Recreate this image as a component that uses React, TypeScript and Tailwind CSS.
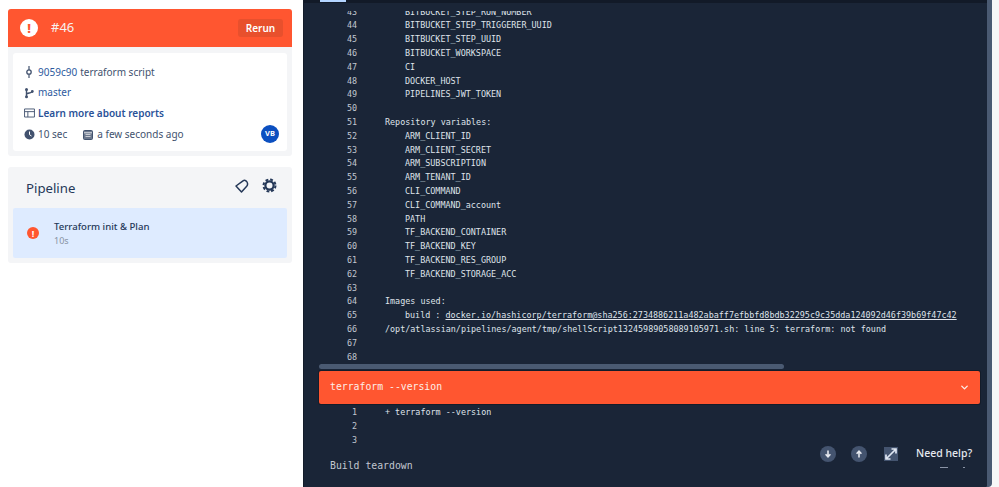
import { ChevronDown } from "lucide-react";

const sans = "font-['Noto_Sans','Open_Sans',sans-serif]";

type LogLine = { n: number; text?: string; indent?: boolean; link?: string };

const stepLog: LogLine[] = [
  { n: 43, text: "BITBUCKET_STEP_RUN_NUMBER", indent: true },
  { n: 44, text: "BITBUCKET_STEP_TRIGGERER_UUID", indent: true },
  { n: 45, text: "BITBUCKET_STEP_UUID", indent: true },
  { n: 46, text: "BITBUCKET_WORKSPACE", indent: true },
  { n: 47, text: "CI", indent: true },
  { n: 48, text: "DOCKER_HOST", indent: true },
  { n: 49, text: "PIPELINES_JWT_TOKEN", indent: true },
  { n: 50 },
  { n: 51, text: "Repository variables:" },
  { n: 52, text: "ARM_CLIENT_ID", indent: true },
  { n: 53, text: "ARM_CLIENT_SECRET", indent: true },
  { n: 54, text: "ARM_SUBSCRIPTION", indent: true },
  { n: 55, text: "ARM_TENANT_ID", indent: true },
  { n: 56, text: "CLI_COMMAND", indent: true },
  { n: 57, text: "CLI_COMMAND_account", indent: true },
  { n: 58, text: "PATH", indent: true },
  { n: 59, text: "TF_BACKEND_CONTAINER", indent: true },
  { n: 60, text: "TF_BACKEND_KEY", indent: true },
  { n: 61, text: "TF_BACKEND_RES_GROUP", indent: true },
  { n: 62, text: "TF_BACKEND_STORAGE_ACC", indent: true },
  { n: 63 },
  { n: 64, text: "Images used:" },
  {
    n: 65,
    text: "build : ",
    indent: true,
    link: "docker.io/hashicorp/terraform@sha256:2734886211a482abaff7efbbfd8bdb32295c9c35dda124092d46f39b69f47c42"
  },
  { n: 66, text: "/opt/atlassian/pipelines/agent/tmp/shellScript13245989058089105971.sh: line 5: terraform: not found" },
  { n: 67 },
  { n: 68 }
];

const commandLog: LogLine[] = [{ n: 1, text: "+ terraform --version" }, { n: 2 }, { n: 3 }];

function LogRow({ n, text, indent, link }: LogLine) {
  return (
    <div className="flex h-[13.8px] items-center whitespace-pre">
      <span className="w-[38px] shrink-0 text-right text-[#c1c7d0]">{n}</span>
      <span className={indent ? "pl-[48px]" : "pl-[28px]"}>
        {text}
        {link && <span className="underline">{link}</span>}
      </span>
    </div>
  );
}

function RoundButton({ up }: { up?: boolean }) {
  return (
    <div className="flex h-[16px] w-[16px] items-center justify-center rounded-full bg-[#44546f]">
      <svg width="10" height="10" viewBox="0 0 10 10" className={up ? "rotate-180" : ""}>
        <path d="M5 1.500v6M2.600 5.200 5 7.800l2.400-2.600" fill="none" stroke="#e6e9ef" strokeWidth="1.600" />
      </svg>
    </div>
  );
}

export default function App() {
  return (
    <div className={`flex h-[487px] w-[999px] overflow-hidden bg-white ${sans}`}>
      <aside className="w-[303px] shrink-0 pl-[8px] pr-[11px] pt-[9px]">
        <div className="rounded-[3px] bg-[#f4f5f7] pb-[5px]">
          <div className="flex h-[38px] items-center justify-between rounded-t-[3px] bg-[#ff5630] pl-[12px] pr-[9px] text-white">
            <div className="flex items-center gap-[13px]">
              <div className="flex h-[18px] w-[18px] items-center justify-center rounded-full bg-white text-[13px] font-extrabold leading-none text-[#ff5630]">
                !
              </div>
              <span className="text-[13px] text-[#f7f1ef]">#46</span>
            </div>
            <div className="flex h-[18px] w-[45px] items-center justify-center rounded-[3px] bg-[#e8502d] text-[10px] font-semibold">
              Rerun
            </div>
          </div>
          <div className="mx-[5px] mt-[6px] flex h-[98px] flex-col gap-[3.5px] rounded-[3px] bg-white pl-[11px] pr-[8px] pt-[10.5px] text-[10px] text-[#42526e]">
            <div className="flex h-[17px] items-center">
              <svg width="10" height="12" viewBox="0 0 10 12" className="mr-[4px]">
                <path d="M5 0v12" stroke="#42526e" strokeWidth="1.200" />
                <circle cx="5" cy="6" r="2.200" fill="#fff" stroke="#42526e" strokeWidth="1.300" />
              </svg>
              <span className="text-[#2d5a9e]">9059c90</span>
              <span className="ml-[3px]">terraform script</span>
            </div>
            <div className="flex h-[17px] items-center">
              <svg width="10" height="12" viewBox="0 0 10 12" className="mr-[4px]">
                <path d="M2.500 2v8M2.500 7.500c0-2 5.500-1 5.500-3" fill="none" stroke="#42526e" strokeWidth="1.400" />
                <circle cx="2.500" cy="2.500" r="1.500" fill="#42526e" />
                <circle cx="2.500" cy="9.800" r="1.500" fill="#42526e" />
                <circle cx="8.300" cy="4.500" r="1.400" fill="#42526e" />
              </svg>
              <span className="text-[#2d5a9e]">master</span>
            </div>
            <div className="flex h-[17px] items-center">
              <svg width="11" height="10" viewBox="0 0 12 10" className="mr-[3px]">
                <path
                  d="M.6.6h10.800v8.800H.6zM.6 3.500h10.800M4.200 3.500v5.900"
                  fill="none"
                  stroke="#42526e"
                  strokeWidth="1"
                />
              </svg>
              <span className="font-semibold text-[#2a5298]">Learn more about reports</span>
            </div>
            <div className="flex h-[18px] items-center">
              <svg width="11" height="11" viewBox="0 0 11 11" className="mr-[3px]">
                <circle cx="5.500" cy="5.500" r="5" fill="#42526e" />
                <path d="M5.500 2.500v3.200l2 1.300" fill="none" stroke="#fff" strokeWidth="1" />
              </svg>
              <span>10 sec</span>
              <svg width="10" height="11" viewBox="0 0 10 11" className="ml-[16px] mr-[4px]">
                <rect x=".5" y="1.500" width="9" height="9" rx="1" fill="#6b778c" stroke="#42526e" />
                <path d="M1 3.800h8" stroke="#fff" strokeWidth=".8" />
                <path d="M2.500 5.500h5M2.500 7.500h5" stroke="#dfe1e6" strokeWidth=".8" />
              </svg>
              <span>a few seconds ago</span>
              <div className="ml-auto flex h-[18px] w-[18px] items-center justify-center rounded-full bg-[#0b4fc0] text-[7.5px] font-bold text-white">
                VB
              </div>
            </div>
          </div>
        </div>

        <div className="mt-[11px] rounded-[3px] bg-[#f4f5f7] px-[5px] pb-[5px]">
          <div className="flex h-[41px] items-center justify-between pl-[13px] pr-[10px]">
            <h2 className="pt-[2px] text-[13.2px] font-normal text-[#253858]">Pipeline</h2>
            <div className="flex items-center gap-[13px] pb-[4px]">
              <svg width="14" height="14" viewBox="0 0 14 14">
                <path
                  d="M1 7 8 1.800C9.500.8 11.200 1.500 12 3c.8 1.500.6 3.200-.3 4.200L6.500 13ZM1 7"
                  fill="none"
                  stroke="#253858"
                  strokeWidth="1.500"
                  strokeLinejoin="round"
                />
              </svg>
              <svg width="15" height="15" viewBox="0 0 15 15">
                <circle cx="7.500" cy="7.500" r="4.100" fill="none" stroke="#253858" strokeWidth="2.200" />
                <circle cx="7.500" cy="7.500" r="6" fill="none" stroke="#253858" strokeWidth="2" strokeDasharray="2.800 1.900" />
              </svg>
            </div>
          </div>
          <div className="flex h-[50px] items-center rounded-[2px] bg-[#deebff] pl-[14px]">
            <div className="flex h-[12px] w-[12px] items-center justify-center rounded-full bg-[#ff5630] text-[9px] font-bold leading-none text-white">
              !
            </div>
            <div className="ml-[15px]">
              <div className="pt-[1px] text-[9.6px] font-medium leading-[14px] text-[#253858]">Terraform init &amp; Plan</div>
              <div className="mt-[1px] text-[9px] leading-[12px] text-[#8993a4]">10s</div>
            </div>
          </div>
        </div>
      </aside>

      <main className="relative flex w-[689px] shrink-0 rounded-br-[6px] border-l border-[#141c2a] bg-[#1a2537]">
        <div className="flex min-w-0 flex-1 flex-col font-['DejaVu_Sans_Mono',monospace] text-[8.42px] text-[#dfe3ea]">
          <div className="h-[2.5px] shrink-0 bg-[#121a28]">
            <div className="ml-[16px] h-[1.5px] w-[26px] bg-[#b3d4ff]" />
          </div>
          <div className="ml-[15px] mt-[8px] h-[353px] w-[668px] shrink-0 overflow-hidden">
            <div className="-mt-[5.5px] w-[660px]">
              {stepLog.map((l) => (
                <LogRow key={l.n} {...l} />
              ))}
            </div>
          </div>
          <div className="ml-[15px] h-[5px] w-[465px] shrink-0 rounded-full bg-[#4a5a72]" />
          <div className="ml-[15px] mt-[2px] flex h-[33px] w-[661px] shrink-0 items-center justify-between rounded-[2px] bg-[#ff5630] pl-[11px] pr-[10px] text-[9.8px] text-[#fdeee9] shadow-[0_0_0_1px_#141c2a]">
            <span>terraform --version</span>
            <ChevronDown size={11} strokeWidth={3} />
          </div>
          <div className="ml-[15px] mt-[1px] pt-[1px]">
            {commandLog.map((l) => (
              <LogRow key={l.n} {...l} />
            ))}
          </div>
          <div className="ml-[26px] mt-[12px] text-[9.8px] text-[#c1c7d0]">Build teardown</div>
        </div>
        <div className="w-[5px] shrink-0 rounded-br-[4px] bg-[#4a5a72]" />

        {/* floating controls */}
        <div className="absolute left-[516px] top-[446px] flex items-center">
          <RoundButton />
          <div className="ml-[15px]">
            <RoundButton up />
          </div>
          <div className="ml-[17px] flex h-[14px] w-[14px] items-center justify-center bg-[#44546f]">
            <svg width="14" height="14" viewBox="0 0 14 14">
              <path
                d="M2 12 12 2M7.500 2H12v4.500M2 7.500V12h4.500"
                fill="none"
                stroke="#dfe6f2"
                strokeWidth="1.700"
              />
            </svg>
          </div>
          <div className={`ml-[18px] whitespace-nowrap text-[10.5px] font-medium text-[#e6e9ef] ${sans}`}>Need help?</div>
        </div>
        <div className="absolute left-[636px] top-[467px] h-px w-[8px] bg-[#8a94a6]" />
        <div className="absolute left-[659px] top-[467px] h-px w-[2px] bg-[#8a94a6]" />
      </main>
      <div className="flex-1 bg-[#f7f7f7]" />
    </div>
  );
}
